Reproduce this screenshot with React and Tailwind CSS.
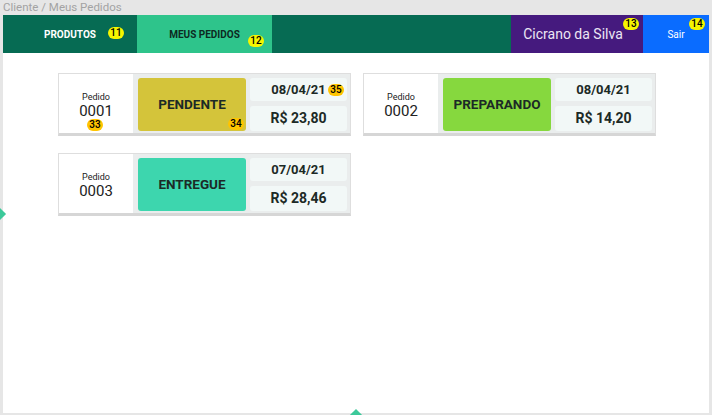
const pedidos = [
  { id: "0001", status: "PENDENTE", color: "bg-[#d4c43a]", date: "08/04/21", price: "R$ 23,80", marks: true },
  { id: "0002", status: "PREPARANDO", color: "bg-[#86d83e]", date: "08/04/21", price: "R$ 14,20" },
  { id: "0003", status: "ENTREGUE", color: "bg-[#3dd6ae]", date: "07/04/21", price: "R$ 28,46" },
];

// small numbered marker used in the nav (bright yellow) and cards (amber)
function Mark({ n, className = "", amber }) {
  return (
    <span
      className={`absolute flex items-center justify-center w-[16px] h-[12px] rounded-full text-[10px] leading-none font-medium text-black ${
        amber ? "bg-[#ffc400]" : "bg-[#f6f500]"
      } ${className}`}
    >
      {n}
    </span>
  );
}

function PedidoCard({ p }) {
  return (
    <div className="flex w-[293px] h-[63px] border border-[#dedede] border-b-[3px] border-b-[#d6d6d6] bg-white">
      {/* Order number */}
      <div className="relative w-[74px] flex flex-col items-center justify-center pt-[3px]">
        <span className="text-[9px] leading-[12px] text-[#222]">Pedido</span>
        <span className="text-[15px] leading-[17px] text-[#222]">{p.id}</span>
        {p.marks && <Mark n="33" amber className="left-[28px] top-[45px]" />}
      </div>

      {/* Status + info */}
      <div className="flex-1 flex gap-[4px] bg-[#eaeded] pl-[5px] pr-[3px] pt-[4px] pb-[2px]">
        <div className={`relative w-[108px] rounded-[3px] flex items-center justify-center ${p.color}`}>
          <span className="text-[13.5px] font-bold text-[#1c2a26]">{p.status}</span>
          {p.marks && <Mark n="34" amber className="right-[2px] bottom-[1px]" />}
        </div>
        <div className="flex-1 flex flex-col gap-[5px]">
          <div className="relative h-[23px] rounded-[3px] bg-[#f2f8f7] flex items-center justify-center">
            <span className="text-[13px] font-bold text-[#1c2a26]">{p.date}</span>
            {p.marks && <Mark n="35" amber className="right-[3px] top-[6px]" />}
          </div>
          <div className="flex-1 rounded-[3px] bg-[#f2f8f7] flex items-center justify-center">
            <span className="text-[14px] font-bold text-[#1c2a26]">{p.price}</span>
          </div>
        </div>
      </div>
    </div>
  );
}

export default function App() {
  return (
    <div
      className="relative w-[712px] h-[415px] overflow-hidden bg-[#e6e6e6]"
      style={{ fontFamily: "Roboto, 'Liberation Sans', sans-serif" }}
    >
      <div className="h-[15px] pl-[3px] text-[11.5px] leading-[14px] text-[#a3a3a3]">Cliente / Meus Pedidos</div>

      <div className="ml-[3px] w-[706px] h-[398px] bg-white">
        {/* Nav */}
        <nav className="flex h-[38px] bg-[#066b53] text-white">
          <div className="relative w-[134px] flex items-center justify-center">
            <span className="text-[10px] font-bold">PRODUTOS</span>
            <Mark n="11" className="left-[105px] top-[12px]" />
          </div>
          <div className="relative w-[135px] flex items-center justify-center bg-[#2ec48b]">
            <span className="text-[10px] font-bold text-[#0d2a22]">MEUS PEDIDOS</span>
            <Mark n="12" className="left-[111px] top-[20px]" />
          </div>
          <div className="flex-1" />
          <div className="relative w-[132px] flex items-center justify-center bg-[#451a7e] pr-[8px]">
            <span className="text-[14px] text-[#ece6f4]">Cicrano da Silva</span>
            <Mark n="13" className="left-[112px] top-[3px]" />
          </div>
          <div className="relative w-[66px] flex items-center justify-center bg-[#0a6cff]">
            <span className="text-[10px]">Sair</span>
            <Mark n="14" className="left-[46px] top-[3px]" />
          </div>
        </nav>

        {/* Orders */}
        <div className="grid grid-cols-[293px_293px] gap-x-[12px] gap-y-[17px] pl-[55px] pt-[20px]">
          {pedidos.map((p) => (
            <PedidoCard key={p.id} p={p} />
          ))}
        </div>
      </div>

      {/* stray canvas handles */}
      <div className="absolute left-[-6px] top-[209px] w-[10px] h-[10px] rotate-45 bg-[#3cc99a]" />
      <div className="absolute left-[351px] top-[411px] w-[10px] h-[10px] rotate-45 bg-[#3cc99a]" />
    </div>
  );
}
